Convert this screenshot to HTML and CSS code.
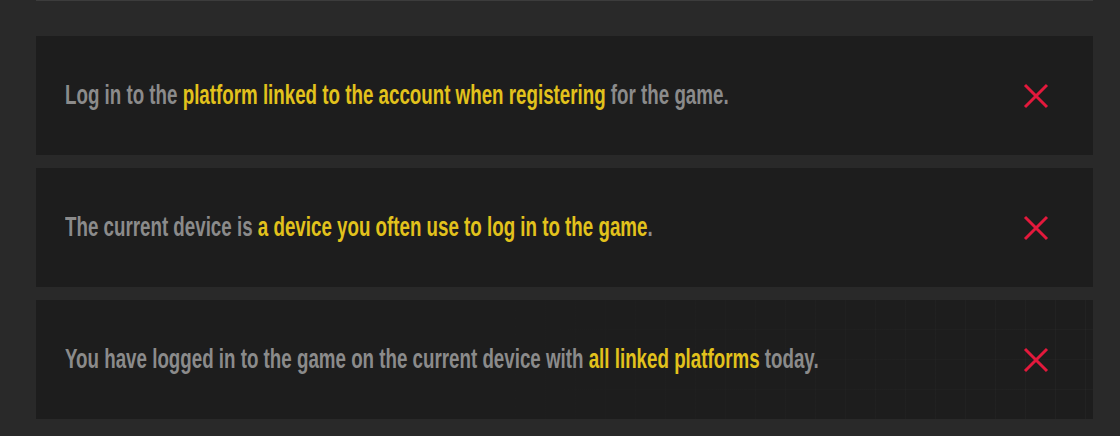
FILE: index.html
```html
<!DOCTYPE html>
<html lang="en">
<head>
<meta charset="utf-8">
<title>Login conditions</title>
<link rel="stylesheet" href="styles.css">
</head>
<body>
<div class="page">
  <div class="rule"></div>
  <ul class="conditions">
    <li class="condition">
      <p class="text"><span class="inner">Log in to the <em>platform linked to the account when registering</em> for the game.</span></p>
      <svg class="mark" viewBox="0 0 26 26" aria-hidden="true"><path d="M2 2 L24 24 M24 2 L2 24"/></svg>
    </li>
    <li class="condition">
      <p class="text"><span class="inner">The current device is <em>a device you often use to log in to the game</em>.</span></p>
      <svg class="mark" viewBox="0 0 26 26" aria-hidden="true"><path d="M2 2 L24 24 M24 2 L2 24"/></svg>
    </li>
    <li class="condition textured">
      <p class="text"><span class="inner">You have logged in to the game on the current device with <em>all linked platforms</em> today.</span></p>
      <svg class="mark" viewBox="0 0 26 26" aria-hidden="true"><path d="M2 2 L24 24 M24 2 L2 24"/></svg>
    </li>
  </ul>
</div>
</body>
</html>
```
FILE: styles.css
```css
html, body {
  margin: 0;
  padding: 0;
  background: #292929;
}
.page {
  padding: 0 27px 0 36px;
}
.rule {
  height: 1px;
  background: #3c3c3c;
}
.conditions {
  list-style: none;
  margin: 35px 0 0;
  padding: 0;
  display: flex;
  flex-direction: column;
  gap: 13px;
}
.condition {
  height: 119px;
  background: #1d1d1d;
  display: flex;
  align-items: center;
  justify-content: space-between;
  padding: 0 44px 0 29px;
  box-sizing: border-box;
}
.textured {
  background-color: #1d1d1d;
  background-image:
    linear-gradient(90deg, #1d1d1d 0 45%, rgba(29,29,29,0) 100%),
    repeating-linear-gradient(90deg, transparent 0 29px, rgba(255,255,255,0.022) 29px 30px),
    repeating-linear-gradient(0deg, transparent 0 29px, rgba(255,255,255,0.018) 29px 30px);
}
.text {
  margin: 0;
  font-family: "Liberation Sans Narrow", "Liberation Sans", sans-serif;
  font-weight: 700;
  font-size: 18.75px;
  color: #8b8b8b;
  line-height: 1;
}
.inner {
  display: inline-block;
  transform: scaleY(1.48);
  white-space: nowrap;
}
.text em {
  font-style: normal;
  color: #e2c21c;
}
.mark {
  width: 26px;
  height: 26px;
  flex: none;
}
.mark path {
  stroke: #e3193c;
  stroke-width: 3;
  stroke-linecap: butt;
  fill: none;
}
```
